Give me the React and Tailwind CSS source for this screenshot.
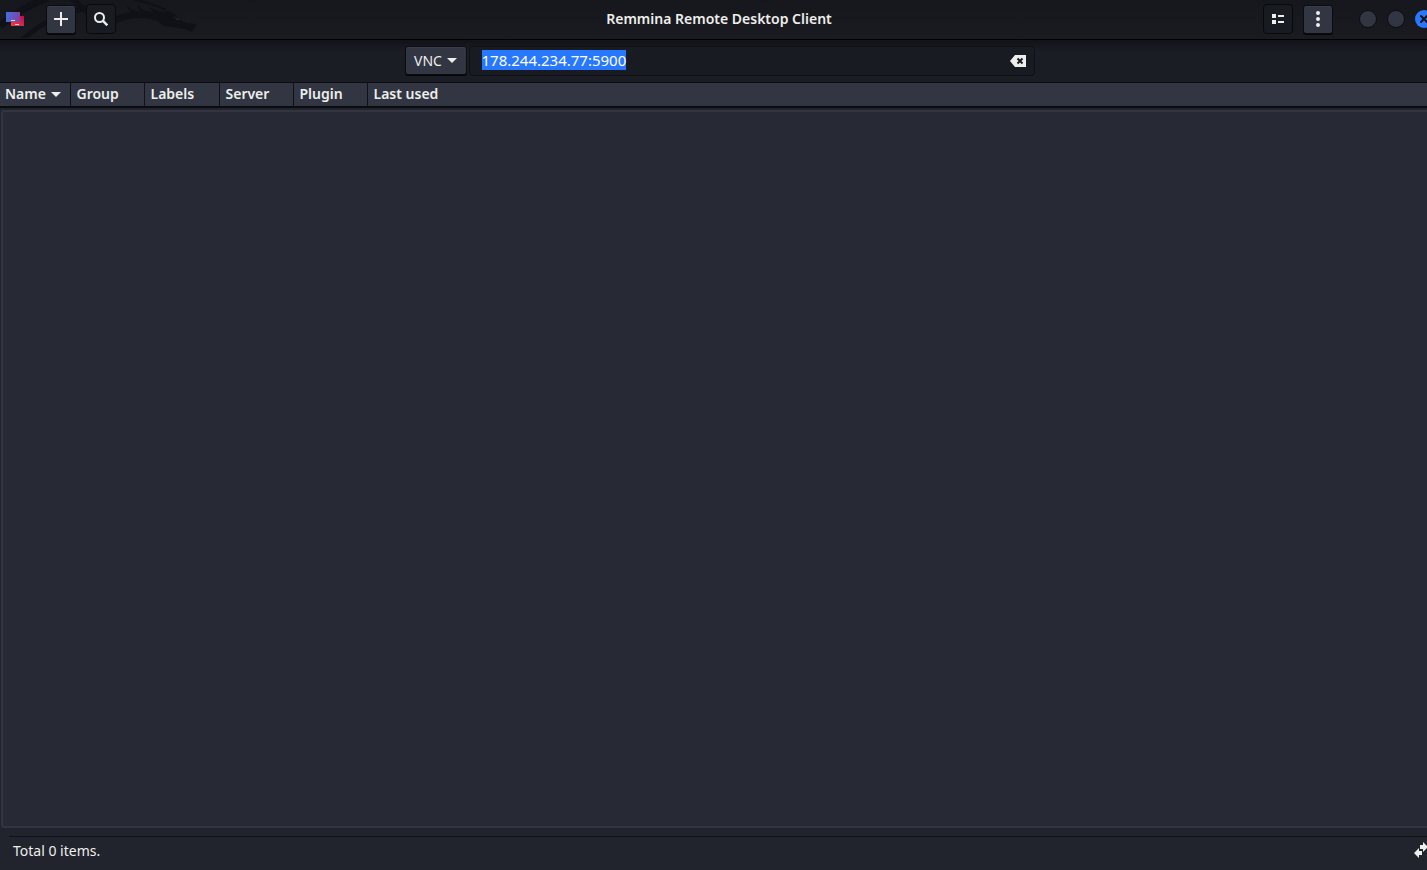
import { useEffect, useRef, useState } from 'react';

const columns = [
  { label: 'Name', width: 'w-[70px]', pad: 'pl-[5px]', sorted: true },
  { label: 'Group', width: 'w-[74px]', pad: 'pl-[6px]' },
  { label: 'Labels', width: 'w-[75px]', pad: 'pl-[6px]' },
  { label: 'Server', width: 'w-[74px]', pad: 'pl-[6px]' },
  { label: 'Plugin', width: 'w-[74px]', pad: 'pl-[6px]' },
  { label: 'Last used', width: '', pad: 'pl-[6px]' },
];

const raised =
  'flex items-center justify-center rounded-[3px] border border-[#0b0c10] bg-[#323643] shadow-[0_1px_0_#050608,inset_0_1px_0_#3b3f4d]';
const flat =
  'flex items-center justify-center rounded-[4px] border border-[#08090b] bg-[#191b22]';

const Caret = () => (
  <svg className="h-[5px] w-[10px] shrink-0" viewBox="0 0 10 5" fill="#eeeeec" aria-hidden="true">
    <path d="M0 0h10L5 5z" />
  </svg>
);

const AppIcon = () => (
  <svg className="h-4 w-[18px]" viewBox="0 0 18 16" aria-label="Remmina" role="img">
    <defs>
      <linearGradient id="blue" x1="0" y1="0.4" x2="1" y2="0.6">
        <stop offset="0" stopColor="#416fe0" />
        <stop offset="1" stopColor="#8a3f9c" />
      </linearGradient>
      <linearGradient id="red" x1="0" y1="1" x2="1" y2="0">
        <stop offset="0" stopColor="#ee4444" />
        <stop offset="1" stopColor="#b80e58" />
      </linearGradient>
    </defs>
    <path d="M5 5h13v10H5z" fill="url(#red)" />
    <path d="M0 1h14v10H0z" fill="url(#blue)" />
    <path d="M5 9.5h4M9 13.5h4" stroke="#e6dcec" />
  </svg>
);

// Faint dragon artwork behind the title bar buttons
const Dragon = () => (
  <svg className="pointer-events-none absolute top-0 left-0 h-[38px] w-[200px]" viewBox="0 0 200 38" aria-hidden="true">
    <g fill="none" stroke="#101116">
      <path d="M0 26C14 14 28 5 48 -2" strokeWidth="7" />
      <path d="M22 40C38 26 56 14 88 8" strokeWidth="5" />
      <path d="M72 -2l16 15" strokeWidth="5" />
      <path d="M134 0c12 2 22 5 32 10" strokeWidth="2" />
    </g>
    <path
      fill="#101116"
      d="M98 36C104 22 114 14 132 12c-3-1-5-4-5-7 3 4 7 6 15 7-3-1-4-4-4-7 4 5 8 7 16 7-3-1-4-3-4-5 4 3 8 4 14 5l5-1 4 2 8 7 6 3 10 1-5 8-7-3-14-2-8-1-5-5c-12-4-26-4-36 0-10 4-20 8-24 15z"
    />
    <path d="M173 16l8 4-4 0z" fill="#22242b" />
  </svg>
);

const App = () => {
  const [address, setAddress] = useState('178.244.234.77:5900');
  const inputRef = useRef(null);

  useEffect(() => {
    inputRef.current.focus();
    inputRef.current.select();
  }, []);

  return (
    <div className="flex h-screen flex-col overflow-hidden bg-[#22242d] font-['Noto_Sans',sans-serif] text-[14px] leading-5 text-[#eeeeec]">

      {/* Title bar */}
      <header className="relative grid shrink-0 grid-cols-[1fr_auto_1fr] items-center border-b border-black bg-linear-to-b from-[#16171c] to-[#1a1b21] pt-1 pb-[5px]">
        <Dragon />
        <div className="relative flex items-center gap-[10px] pl-[6px]">
          <AppIcon />
          <button type="button" aria-label="New connection profile" className={`${raised} ml-3 h-[29px] w-[30px]`}>
            <svg className="size-[14px]" viewBox="0 0 14 14" aria-hidden="true">
              <path d="M7 0v14M0 7h14" stroke="#eeeeec" strokeWidth="2" />
            </svg>
          </button>
          <button type="button" aria-label="Search" className={`${flat} h-[30px] w-[30px]`}>
            <svg className="size-[14px]" viewBox="0 0 14 14" fill="none" stroke="#eeeeec" strokeWidth="2" aria-hidden="true">
              <circle cx="5.5" cy="5.5" r="4.5" />
              <path d="M8.7 8.7l4.6 4.6" strokeWidth="2.4" />
            </svg>
          </button>
        </div>
        <h1 className="pl-[11px] font-semibold">Remmina Remote Desktop Client</h1>
        <div className="relative -mr-[6px] flex items-center justify-end gap-[10px]">
          <button type="button" aria-label="Toggle view" className={`${flat} h-[30px] w-[30px]`}>
            <svg className="h-[10px] w-3" viewBox="0 0 12 10" fill="#eeeeec" aria-hidden="true">
              <path d="M0 0h4v4H0zM6 1h6v2H6zM0 6h4v4H0zM6 7h6v2H6z" />
            </svg>
          </button>
          <button type="button" aria-label="Menu" className={`${raised} h-[29px] w-[30px]`}>
            <svg className="h-4 w-1" viewBox="0 0 4 16" fill="#eeeeec" aria-hidden="true">
              <circle cx="2" cy="2" r="2" />
              <circle cx="2" cy="8" r="2" />
              <circle cx="2" cy="14" r="2" />
            </svg>
          </button>
          <div className="flex items-center gap-[10px] pl-4">
            <button type="button" aria-label="Minimize" className="size-[18px] rounded-full border border-[#0b0c10] bg-[#323643]" />
            <button type="button" aria-label="Maximize" className="size-[18px] rounded-full border border-[#0b0c10] bg-[#323643]" />
            <button type="button" aria-label="Close" className="flex size-[18px] items-center justify-center rounded-full bg-[#2777ff]">
              <svg className="size-2" viewBox="0 0 8 8" stroke="#101217" strokeWidth="2" aria-hidden="true">
                <path d="M0 0l8 8M8 0L0 8" />
              </svg>
            </button>
          </div>
        </div>
      </header>

      {/* Quick connect */}
      <form
        className="flex shrink-0 justify-center gap-[2px] bg-linear-to-b from-[#121319] to-[#1b1d25] to-[12px] pt-[6px] pb-[6px] pl-3"
        onSubmit={(e) => e.preventDefault()}
      >
        <button type="button" aria-haspopup="listbox" className={`${raised} h-[29px] w-[62px] gap-[5px]`}>
          VNC
          <Caret />
        </button>
        <div className="flex h-[30px] w-[566px] items-center rounded-[4px] border border-[#101116] bg-[#191b22] pr-2 pl-3">
          <input
            ref={inputRef}
            type="text"
            aria-label="Server address"
            value={address}
            onChange={(e) => setAddress(e.target.value)}
            className="mb-[2px] min-w-0 flex-1 bg-transparent text-[15px] outline-none selection:bg-[#2777ff] selection:text-white"
          />
          <button type="button" aria-label="Clear" onClick={() => setAddress('')}>
            <svg className="h-3 w-4" viewBox="0 0 16 12" aria-hidden="true">
              <path d="M5 0h11v12H5L0 6z" fill="#eeeeec" />
              <path d="M7.5 3.5l5 5M12.5 3.5l-5 5" stroke="#191b22" strokeWidth="2" />
            </svg>
          </button>
        </div>
      </form>

      {/* Connection list */}
      <table className="w-full shrink-0 table-fixed border-collapse bg-[#323643]">
        <thead className="border-t border-b-2 border-t-[#0b0c10] border-b-[#0b0c10]">
          <tr>
            {columns.map((col) => (
              <th
                key={col.label}
                scope="col"
                className={`${col.width} ${col.pad} h-6 border-r border-r-[#101217] p-0 text-left font-semibold last:border-r-0`}
              >
                <button type="button" className="flex items-center gap-[5px] whitespace-nowrap">
                  {col.label}
                  {col.sorted && <Caret />}
                </button>
              </th>
            ))}
          </tr>
        </thead>
      </table>
      <main className="mt-[2px] ml-px flex-1 rounded-l-[3px] border-2 border-r-0 border-[#323440] bg-[#272a34]" />

      {/* Status bar */}
      <footer className="mt-2 ml-[9px] flex h-[34px] shrink-0 items-start justify-between border-t border-[#101217] pt-1 pl-1">
        <span>Total 0 items.</span>
        <svg className="mt-px h-4 w-[13px]" viewBox="0 0 13 16" fill="#eeeeec" aria-hidden="true">
          <path d="M6 3h3V0l5 5-5 5V7H6zM8 13H5v3L0 11l5-5v3h3z" />
        </svg>
      </footer>
    </div>
  );
};

export default App;
